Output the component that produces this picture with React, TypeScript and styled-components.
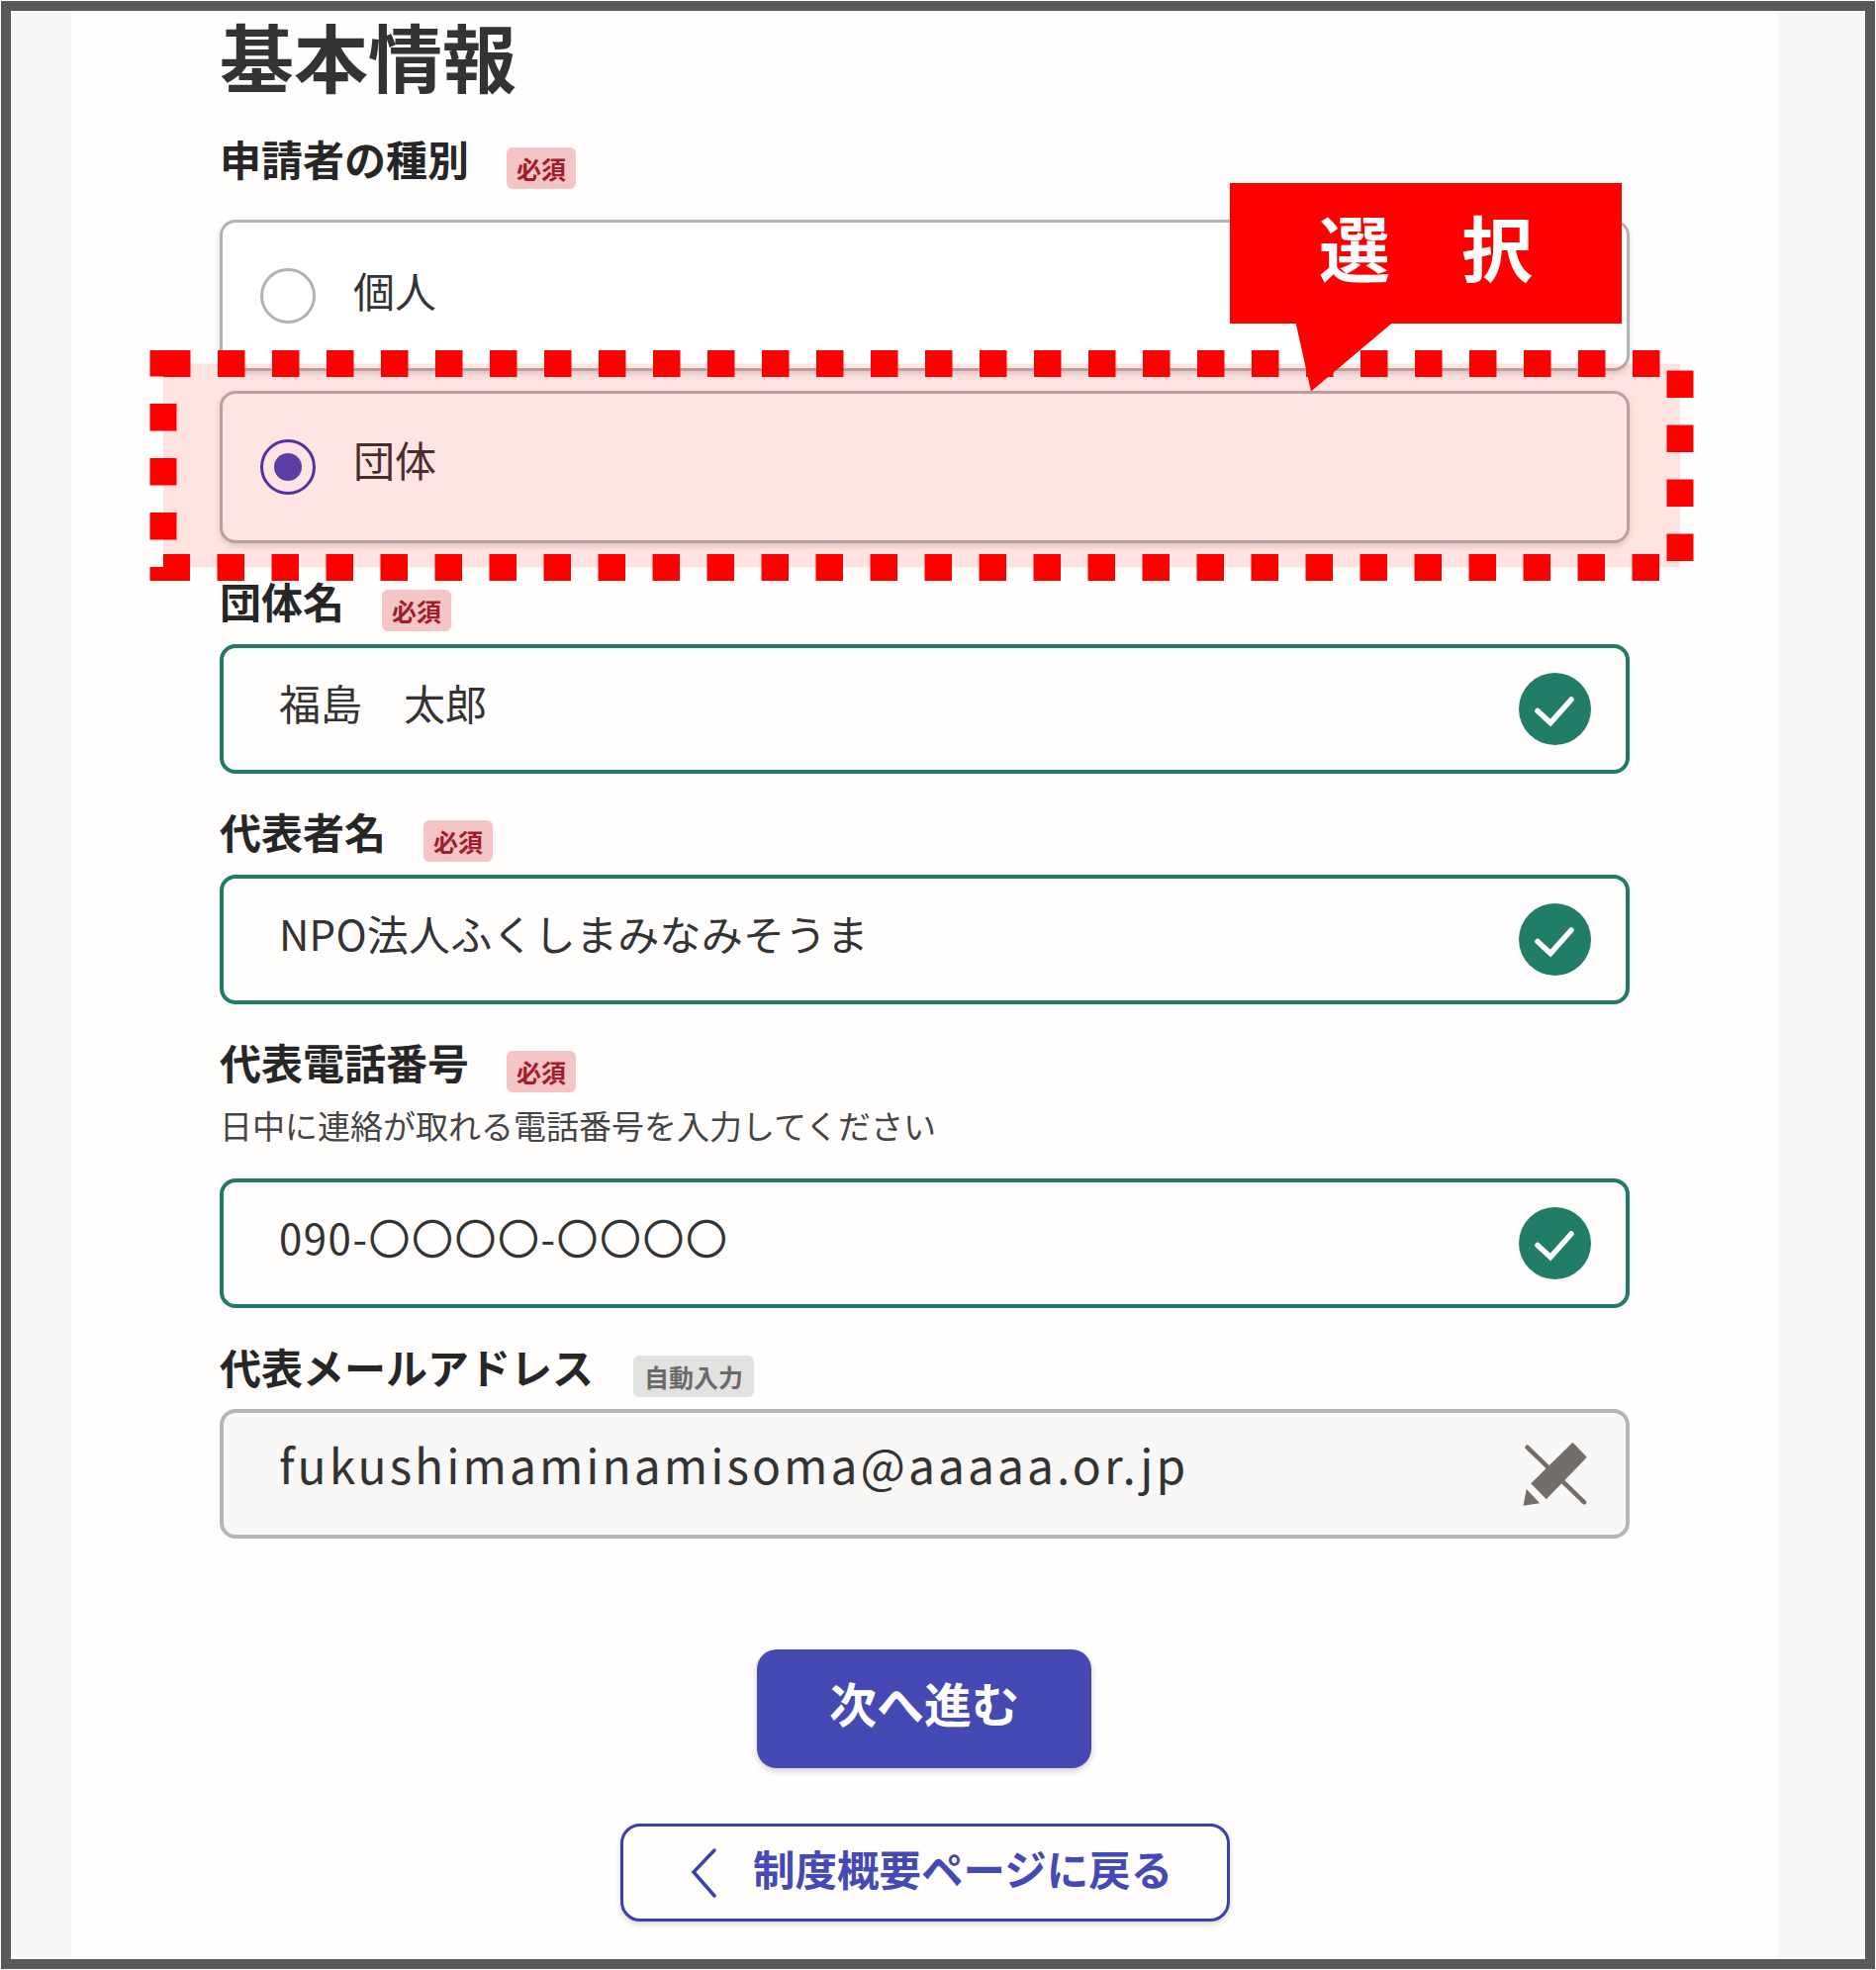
import { createGlobalStyle } from "styled-components";
import styled from "styled-components";

const GlobalStyle = createGlobalStyle`
  html, body {
    margin: 0;
    padding: 0;
    background: #fff;
  }
  body {
    font-family: "Noto Sans CJK JP", "Noto Sans", sans-serif;
  }
`;

const Page = styled.div`
  position: relative;
  width: 1896px;
  height: 1991px;
  padding: 1px;
  box-sizing: border-box;
  overflow: hidden;
`;

const Frame = styled.div`
  display: flex;
  height: 100%;
  box-sizing: border-box;
  border: 10px solid #595959;
  padding-left: 61px;
  background: #f9f8f6;
`;

const Panel = styled.main`
  display: flex;
  flex-direction: column;
  width: 1725px;
  box-sizing: border-box;
  padding: 0 150px;
  background: #fffefc;
`;

const Title = styled.h1`
  margin: 0;
  height: 98px;
  font-size: 75px;
  line-height: 90px;
  font-weight: 700;
  color: #333;
`;

const LabelRow = styled.div<{ $top: number; $after: number }>`
  display: flex;
  align-items: flex-start;
  gap: 38px;
  margin-top: ${({ $top }) => $top}px;
  margin-bottom: ${({ $after }) => $after}px;
`;

const Label = styled.label`
  font-size: 42px;
  line-height: 38px;
  height: 42px;
  font-weight: 700;
  color: #262626;
  white-space: nowrap;
`;

const Badge = styled.span<{ $auto?: boolean }>`
  display: flex;
  align-items: center;
  justify-content: center;
  margin-top: 8px;
  margin-left: ${({ $auto }) => ($auto ? 2 : 0)}px;
  height: 42px;
  padding: 0 ${({ $auto }) => ($auto ? 11 : 10)}px;
  border-radius: 6px;
  font-size: 25px;
  font-weight: 700;
  background: ${({ $auto }) => ($auto ? "#e2e2e0" : "#f5c4c4")};
  color: ${({ $auto }) => ($auto ? "#6a6a6a" : "#a11d2a")};
`;

const RadioCard = styled.div<{ $mt?: number; $height: number }>`
  display: flex;
  align-items: center;
  gap: 38px;
  height: ${({ $height }) => $height}px;
  margin-top: ${({ $mt }) => $mt ?? 0}px;
  padding-left: 38px;
  box-sizing: border-box;
  border: 3px solid #b2b2b2;
  border-radius: 16px;
  background: #fff;
  box-shadow: 0 3px 6px rgba(0, 0, 0, 0.14);
`;

const RadioMark = styled.span<{ $checked?: boolean }>`
  display: flex;
  align-items: center;
  justify-content: center;
  width: 56px;
  height: 56px;
  box-sizing: border-box;
  border-radius: 50%;
  border: 3px solid ${({ $checked }) => ($checked ? "#3d3ab0" : "#b2b2b2")};

  &::after {
    content: "";
    display: ${({ $checked }) => ($checked ? "block" : "none")};
    width: 28px;
    height: 28px;
    border-radius: 50%;
    background: #4c46b8;
  }
`;

const RadioText = styled.span<{ $lift: number }>`
  font-size: 42px;
  line-height: 56px;
  margin-bottom: ${({ $lift }) => $lift}px;
  color: #333;
`;

const InputBox = styled.div<{ $disabled?: boolean }>`
  display: flex;
  align-items: center;
  justify-content: space-between;
  height: 131px;
  box-sizing: border-box;
  padding: 0 35px 0 56px;
  border: 4px solid ${({ $disabled }) => ($disabled ? "#b5b5b3" : "#1f7a66")};
  border-radius: 16px;
  background: ${({ $disabled }) => ($disabled ? "#f9f8f6" : "#fffefc")};
`;

const InputText = styled.span<{ $size?: number; $spacing?: number; $lift?: number }>`
  font-size: ${({ $size }) => $size ?? 42}px;
  letter-spacing: ${({ $spacing }) => $spacing ?? 0}px;
  line-height: 60px;
  margin-bottom: ${({ $lift }) => $lift ?? 13}px;
  color: #333;
  white-space: nowrap;
`;

const Hint = styled.p`
  margin: 0 0 34px;
  font-size: 33px;
  line-height: 40px;
  color: #444;
`;

const Actions = styled.div`
  display: flex;
  flex-direction: column;
  align-items: flex-start;
  margin-top: 112px;
`;

const NextButton = styled.button`
  display: flex;
  align-items: center;
  justify-content: center;
  width: 338px;
  height: 120px;
  margin-left: 543px;
  padding: 0 0 15px;
  border: none;
  border-radius: 20px;
  background: #4549b3;
  color: #fff;
  font-family: inherit;
  font-size: 48px;
  font-weight: 700;
  box-shadow: 0 3px 6px rgba(0, 0, 0, 0.18);
`;

const BackButton = styled.button`
  display: flex;
  align-items: center;
  gap: 36px;
  width: 616px;
  height: 99px;
  margin: 56px 0 0 405px;
  padding: 0 0 0 68px;
  box-sizing: border-box;
  border: 3px solid #3a40ae;
  border-radius: 20px;
  background: #fffefc;
  color: #4549b3;
  font-family: inherit;
  font-weight: 700;
  white-space: nowrap;
  box-shadow: 0 3px 6px rgba(0, 0, 0, 0.14);
`;

const BackLabel = styled.span`
  font-size: 42.5px;
  margin-bottom: 10px;
`;

const HighlightLayer = styled.svg`
  position: absolute;
  left: 0;
  top: 0;
  pointer-events: none;
`;

const Callout = styled.div`
  position: absolute;
  left: 1243px;
  top: 185px;
  display: flex;
  align-items: center;
  justify-content: center;
  width: 396px;
  height: 142px;
  background: #f00;
  color: #fff;
  font-size: 72px;
  font-weight: 700;
  line-height: 1;
  padding-bottom: 16px;
  box-sizing: border-box;
  white-space: pre;
`;

const CheckIcon = () => (
  <svg width="73" height="73" viewBox="0 0 73 73">
    <circle cx="36.5" cy="36.5" r="36.5" fill="#217d68" />
    <path
      d="M19 38.5 L32 50.5 L53 27"
      fill="none"
      stroke="#fff"
      strokeWidth="5.5"
      strokeLinecap="round"
    />
  </svg>
);

const PencilOffIcon = () => (
  <svg width="73" height="73" viewBox="0 0 73 73">
    <path d="M8.5 9.7 L66.2 65.3" stroke="#716e6c" strokeWidth="4.5" strokeLinecap="round" />
    <path d="M54.5 4.7 L68.8 19.7 L27.8 62.3 L12.2 46.3 Z" fill="#716e6c" />
    <path d="M7.8 52 L21.2 66.3 L4.5 68.7 Z" fill="#716e6c" />
  </svg>
);

const ChevronIcon = () => (
  <svg width="27" height="50" viewBox="0 0 27 50">
    <path
      d="M24 2 L3 24 L24 48"
      fill="none"
      stroke="#3a40ae"
      strokeWidth="3.5"
      strokeLinecap="round"
    />
  </svg>
);

const App = () => {
  return (
    <>
      <GlobalStyle />
      <Page>
        <Frame>
          <Panel>
            <Title>基本情報</Title>

            <LabelRow $top={32} $after={31}>
              <Label>申請者の種別</Label>
              <Badge>必須</Badge>
            </LabelRow>
            <RadioCard $height={153}>
              <RadioMark />
              <RadioText $lift={11}>個人</RadioText>
            </RadioCard>
            <RadioCard $mt={20} $height={154}>
              <RadioMark $checked />
              <RadioText $lift={16}>団体</RadioText>
            </RadioCard>

            <LabelRow $top={39} $after={13}>
              <Label>団体名</Label>
              <Badge>必須</Badge>
            </LabelRow>
            <InputBox>
              <InputText>福島　太郎</InputText>
              <CheckIcon />
            </InputBox>

            <LabelRow $top={39} $after={13}>
              <Label>代表者名</Label>
              <Badge>必須</Badge>
            </LabelRow>
            <InputBox>
              <InputText $spacing={0.25}>NPO法人ふくしまみなみそうま</InputText>
              <CheckIcon />
            </InputBox>

            <LabelRow $top={39} $after={13}>
              <Label>代表電話番号</Label>
              <Badge>必須</Badge>
            </LabelRow>
            <Hint>日中に連絡が取れる電話番号を入力してください</Hint>
            <InputBox>
              <InputText $spacing={1.5}>090-〇〇〇〇-〇〇〇〇</InputText>
              <CheckIcon />
            </InputBox>

            <LabelRow $top={40} $after={12}>
              <Label>代表メールアドレス</Label>
              <Badge $auto>自動入力</Badge>
            </LabelRow>
            <InputBox $disabled>
              <InputText $size={48} $spacing={3} $lift={22}>
                fukushimaminamisoma@aaaaa.or.jp
              </InputText>
              <PencilOffIcon />
            </InputBox>

            <Actions>
              <NextButton>次へ進む</NextButton>
              <BackButton>
                <ChevronIcon />
                <BackLabel>制度概要ページに戻る</BackLabel>
              </BackButton>
            </Actions>
          </Panel>
        </Frame>

        <HighlightLayer width="1896" height="1991" viewBox="0 0 1896 1991">
          <rect
            x="165"
            y="367.5"
            width="1533"
            height="206"
            fill="#f00"
            fillOpacity="0.105"
            stroke="#f00"
            strokeWidth="27"
            strokeDasharray="27.5 27.5"
          />
          <path d="M1309.5 326 L1407.5 326 L1325 395.5 Z" fill="#f00" />
        </HighlightLayer>
        <Callout>{"選　択"}</Callout>
      </Page>
    </>
  );
};

export default App;
